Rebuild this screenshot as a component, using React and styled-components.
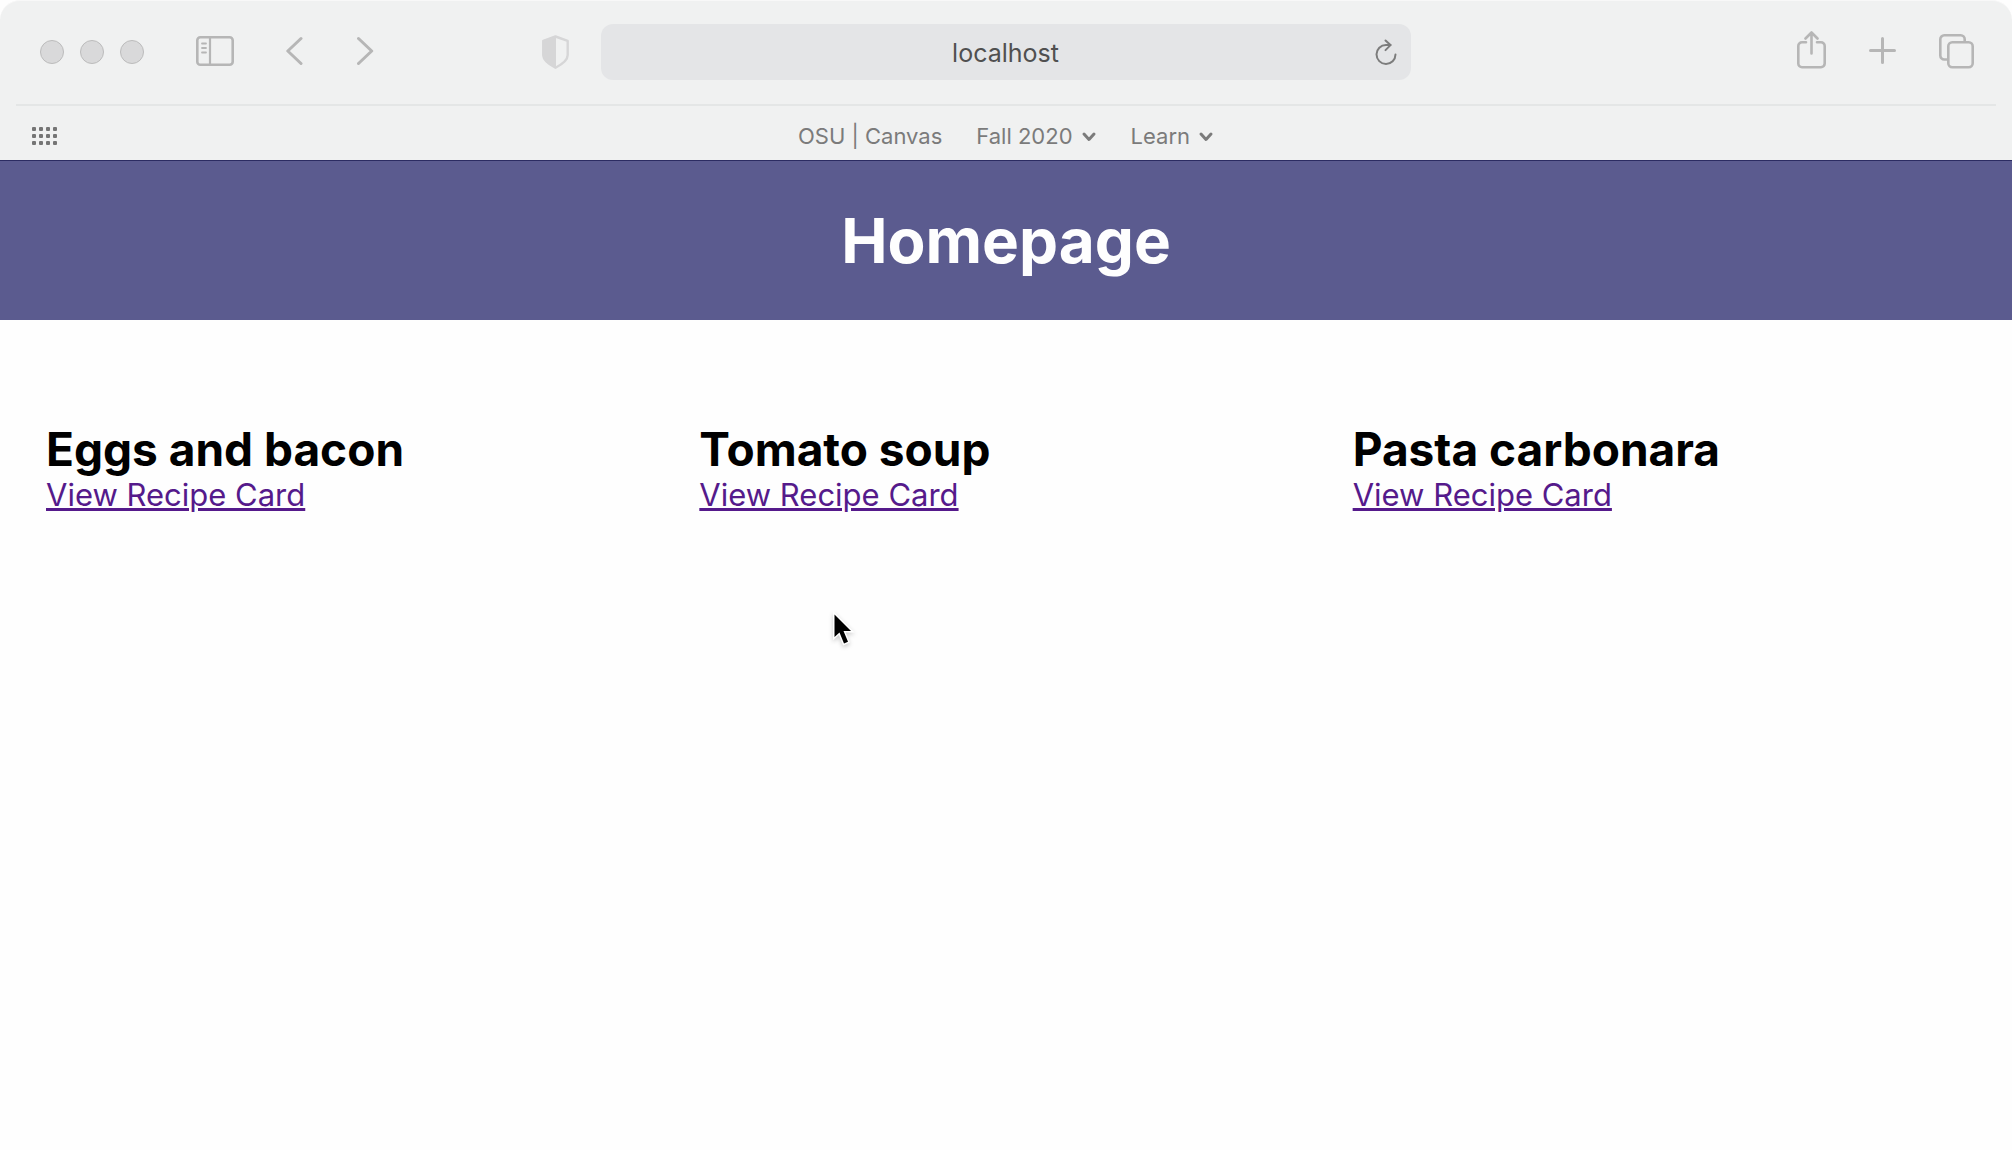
import React from "react";
import styled, { createGlobalStyle } from "styled-components";

const GlobalStyle = createGlobalStyle`
  * { box-sizing: border-box; }
  body {
    margin: 0;
    background: #fefefe;
    color: #000;
    font-family: Inter, "Liberation Sans", sans-serif;
  }
`;

const Chrome = styled.div`
  background: #f0f1f1;
  border-top: 1px solid #f8f8f8;
  border-bottom: 1px solid #2c2c62;
  border-radius: 20px 20px 0 0;
`;

const Toolbar = styled.div`
  display: grid;
  grid-template-columns: 542fr 869fr 601fr;
  align-items: center;
  height: 103px;
  padding-bottom: 2px;
`;

const ToolGroup = styled.div`
  display: flex;
  align-items: center;
  justify-content: ${(p) => (p.$end ? "flex-end" : "flex-start")};
  gap: ${(p) => p.$gap}px;
  padding: 0 38px 0 40px;
`;

const WindowControls = styled.div`
  display: flex;
  gap: 16px;
`;

const WindowDot = styled.button`
  width: 24px;
  height: 24px;
  padding: 0;
  border: 1px solid #bcbcbc;
  border-radius: 50%;
  background: #d9d9da;
`;

const IconButton = styled.button`
  display: flex;
  flex: none;
  padding: 0;
  border: 0;
  background: none;
  color: ${(p) => p.$color || "#b6b6b6"};
`;

const AddressArea = styled.div`
  display: flex;
  align-items: center;
  gap: 32px;
`;

const AddressField = styled.form`
  display: flex;
  flex: 1;
  align-items: center;
  min-width: 0;
  height: 56px;
  padding: 2px 12px 0 36px;
  border-radius: 12px;
  background: #e4e5e7;
`;

const AddressInput = styled.input`
  flex: 1;
  min-width: 0;
  padding: 0;
  border: 0;
  outline: 0;
  background: none;
  color: #505050;
  font: 400 25px/32px Inter, "Liberation Sans", sans-serif;
  text-align: center;
`;

const Favorites = styled.nav`
  display: grid;
  grid-template-columns: 1fr auto 1fr;
  align-items: center;
  height: 56px;
  margin: 0 16px;
  padding: 6px 16px 0;
  border-top: 2px solid #e4e6e6;
`;

const FavoriteList = styled.div`
  display: flex;
  align-items: center;
  gap: 34px;
`;

const favoriteText = `
  color: #7b7b7b;
  font: 400 22px/28px Inter, "Liberation Sans", sans-serif;
  white-space: nowrap;
`;

const FavoriteLink = styled.a`
  ${favoriteText}
  text-decoration: none;
`;

const FavoriteFolder = styled.button`
  ${favoriteText}
  display: flex;
  align-items: center;
  gap: 8px;
  padding: 0;
  border: 0;
  background: none;
`;

const Banner = styled.header`
  padding: 40px 20px;
  background: #5b5b8f;
  color: #fefefe;
  text-align: center;
`;

const BannerTitle = styled.h1`
  margin: 0;
  font-size: 62px;
  line-height: 79px;
  font-weight: 700;
`;

const Recipes = styled.main`
  display: grid;
  grid-template-columns: repeat(3, 1fr);
  padding: 80px 26px;
`;

const Recipe = styled.article`
  padding: 20px;
`;

const RecipeTitle = styled.h2`
  margin: 0;
  font-size: 46px;
  line-height: 58px;
  font-weight: 700;
`;

const RecipeLink = styled.a`
  color: #551a8b;
  font-size: 31px;
  line-height: 34px;
`;

const Pointer = styled.svg`
  position: absolute;
  left: 830px;
  top: 610px;
  filter: drop-shadow(0 2px 2px rgba(0, 0, 0, 0.2));
`;

function Icon({ width, height = 42, stroke = 3, children }) {
  return (
    <svg
      width={width}
      height={height}
      viewBox={`0 0 ${width} ${height}`}
      fill="none"
      stroke="currentColor"
      strokeWidth={stroke}
      strokeLinecap="round"
      strokeLinejoin="round"
      aria-hidden="true"
    >
      {children}
    </svg>
  );
}

function FolderChevron() {
  return (
    <Icon width={16} height={16}>
      <path d="M3 6l5 5.5L13 6" />
    </Icon>
  );
}

const recipes = ["Eggs and bacon", "Tomato soup", "Pasta carbonara"];
const gridRows = [0, 1, 2];
const gridColumns = [0, 1, 2, 3];

export default function App() {
  return (
    <>
      <GlobalStyle />
      <Chrome>
        <Toolbar>
          <ToolGroup $gap={52}>
            <WindowControls>
              <WindowDot aria-label="Close" />
              <WindowDot aria-label="Minimize" />
              <WindowDot aria-label="Zoom" />
            </WindowControls>
            <IconButton aria-label="Sidebar">
              <Icon width={38}>
                <rect x="1.3" y="6.3" width="35.4" height="27.4" rx="3" strokeWidth="2.6" />
                <path d="M14 6.5v27" strokeWidth="2.2" strokeLinecap="butt" />
                <path d="M6 12.5h4M6 17h4M6 21.500h4" strokeWidth="1.8" />
              </Icon>
            </IconButton>
            <IconButton aria-label="Back">
              <Icon width={19}>
                <path d="M15 7.5L1.8 20 15 32.5" />
              </Icon>
            </IconButton>
            <IconButton aria-label="Forward">
              <Icon width={19}>
                <path d="M1.5 7.5L14.7 20 1.5 32.5" />
              </Icon>
            </IconButton>
          </ToolGroup>

          <AddressArea>
            <IconButton aria-label="Privacy report" $color="#d6d6d7">
              <Icon width={27} stroke={2.4}>
                <path d="M13.5 5.5L25.7 9.8v14.200c0 5.5-6 9.5-12.2 12.700C7.3 33.5 1.3 29.5 1.3 24V9.8z" />
                <path d="M14 5L.5 9.5V24c0 5.5 6 9.5 13.5 13z" fill="currentColor" stroke="none" />
              </Icon>
            </IconButton>
            <AddressField onSubmit={(e) => e.preventDefault()}>
              <AddressInput aria-label="Address" defaultValue="localhost" />
              <IconButton type="button" aria-label="Reload" $color="#7c7c7c">
                <Icon width={25} stroke={2}>
                  <path d="M21.5 22.500a9.500 9.500 0 1 1-9.500-9.600h4.500" />
                  <path d="M11.5 8.500l5 4.600-5 5" />
                </Icon>
              </IconButton>
            </AddressField>
          </AddressArea>

          <ToolGroup $end $gap={43}>
            <IconButton aria-label="Share">
              <Icon width={29} stroke={2.6}>
                <path d="M9 11.3H5A3.7 3.7 0 0 0 1.3 15v17.500A3.7 3.7 0 0 0 5 36.2h19a3.7 3.7 0 0 0 3.7-3.7V15a3.7 3.7 0 0 0-3.7-3.7h-4" />
                <path d="M14.5 22.5V2M8.500 7.500l6-6 6 6" />
              </Icon>
            </IconButton>
            <IconButton aria-label="New tab">
              <Icon width={27}>
                <path d="M1.5 19.500h24M13.500 7.500v24" />
              </Icon>
            </IconButton>
            <IconButton aria-label="Tab overview">
              <Icon width={35} stroke={2.6}>
                <rect x="9.3" y="11.3" width="24.4" height="24.9" rx="4" />
                <path d="M8.5 28.500H5.300a4 4 0 0 1-4-4V8.300a4 4 0 0 1 4-4h16.400a4 4 0 0 1 4 4v2.500" strokeLinecap="butt" />
              </Icon>
            </IconButton>
          </ToolGroup>
        </Toolbar>

        <Favorites aria-label="Favorites">
          <IconButton aria-label="Show all bookmarks" $color="#757575">
            <svg width="25" height="18" viewBox="0 0 25 18" fill="currentColor" aria-hidden="true">
              {gridRows.map((r) =>
                gridColumns.map((c) => (
                  <rect key={`${r}-${c}`} x={c * 7} y={r * 7} width="4" height="4" rx="1" />
                ))
              )}
            </svg>
          </IconButton>
          <FavoriteList>
            <FavoriteLink href="#canvas">OSU | Canvas</FavoriteLink>
            <FavoriteFolder>
              Fall 2020
              <FolderChevron />
            </FavoriteFolder>
            <FavoriteFolder>
              Learn
              <FolderChevron />
            </FavoriteFolder>
          </FavoriteList>
        </Favorites>
      </Chrome>

      <Banner>
        <BannerTitle>Homepage</BannerTitle>
      </Banner>

      <Recipes>
        {recipes.map((name) => (
          <Recipe key={name}>
            <RecipeTitle>{name}</RecipeTitle>
            <RecipeLink href="#recipe">View Recipe Card</RecipeLink>
          </Recipe>
        ))}
      </Recipes>

      <Pointer width="28" height="40" viewBox="0 0 28 40" aria-hidden="true">
        <path
          d="M4.500 4.500v22.500l5-4.500 4.500 11 4-1.700-4.500-10.800h7.500z"
          fill="#000"
          stroke="#fff"
          strokeWidth="3"
          paintOrder="stroke"
        />
      </Pointer>
    </>
  );
}
